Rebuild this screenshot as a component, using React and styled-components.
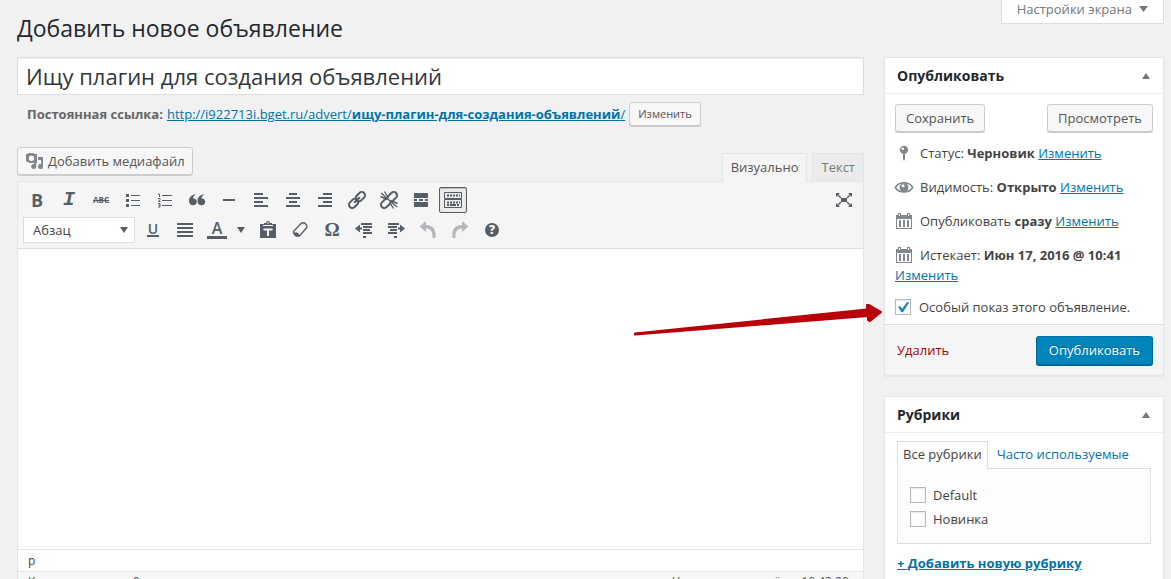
import React, { useState } from 'react';
import styled, { createGlobalStyle, css } from 'styled-components';

const theme = {
  page: '#f1f1f1',
  border: '#e5e5e5',
  text: '#444',
  heading: '#23282d',
  link: '#0073aa',
  icon: '#555d66',
  muted: '#82878c',
};

const GlobalStyle = createGlobalStyle`
  *, *::before, *::after {
    box-sizing: border-box;
  }
  html {
    scrollbar-width: none;
  }
  body {
    margin: 0;
    background: ${theme.page};
    color: ${theme.text};
    font: 13px/20px "Open Sans", sans-serif;
  }
  button, input, select, textarea {
    margin: 0;
    font: inherit;
    color: inherit;
  }
  svg {
    display: block;
    flex: none;
  }
`;

// ---------- layout ----------

const Page = styled.div`
  height: 100vh;
  overflow: hidden;
  padding: 0 7px 0 17px;
`;

const TopBar = styled.header`
  display: flex;
  justify-content: space-between;
  align-items: flex-start;
  height: 57px;
`;

const Title = styled.h1`
  margin: 0;
  padding-top: 13px;
  font-size: 23px;
  font-weight: 400;
  line-height: 30px;
  color: ${theme.heading};
`;

const ScreenOptions = styled.button`
  display: flex;
  align-items: center;
  gap: 7px;
  height: 24px;
  padding: 0 15px 6px;
  border: 1px solid #ddd;
  border-top: 0;
  background: #fff;
  color: #72777c;
`;

const Columns = styled.div`
  display: grid;
  grid-template-columns: minmax(0, 1fr) 280px;
  gap: 20px;
  align-items: start;
`;

const Row = styled.div`
  display: flex;
  align-items: center;
`;

// ---------- shared controls ----------

const Button = styled.button`
  display: inline-flex;
  align-items: center;
  justify-content: center;
  gap: 4px;
  height: 28px;
  padding: 0 10px;
  border: 1px solid #ccc;
  border-radius: 3px;
  background: #f7f7f7;
  box-shadow: 0 1px 0 #ccc;
  color: #555;
  white-space: nowrap;
  ${({ $small }) => $small && css`
    height: 24px;
    padding: 0 8px;
    font-size: 11px;
  `}
  ${({ $primary }) => $primary && css`
    height: 29px;
    padding: 0 12px;
    border-color: #0073aa #006799 #006799;
    background: #0085ba;
    box-shadow: 0 1px 0 #006799;
    color: #fff;
    text-shadow: 0 -1px 1px #006799;
  `}
`;

const Link = styled.a`
  color: ${theme.link};
  text-decoration: ${({ $plain }) => ($plain ? 'none' : 'underline')};
  font-weight: ${({ $bold }) => ($bold ? 700 : 400)};
`;

const Checkbox = styled.input.attrs({ type: 'checkbox' })`
  appearance: none;
  flex: none;
  width: 16px;
  height: 16px;
  border: 1px solid #b4b9be;
  background: #fff;
  box-shadow: inset 0 1px 2px rgba(0, 0, 0, .1);
  &:checked::before {
    content: "";
    display: block;
    width: 14px;
    height: 14px;
    background: #1e8cbe;
    clip-path: polygon(14% 48%, 32% 44%, 44% 62%, 78% 14%, 94% 18%, 50% 88%, 38% 88%);
  }
`;

// ---------- editor column ----------

const TitleInput = styled.input`
  display: block;
  width: 100%;
  height: 38px;
  padding: 0 8px;
  border: 1px solid #ddd;
  background: #fff;
  box-shadow: inset 0 1px 2px rgba(0, 0, 0, .07);
  color: #32373c;
  font-size: 22px;
`;

const Permalink = styled(Row)`
  gap: 4px;
  margin-top: 7px;
  padding-left: 10px;
  color: #666;
`;

const EditorTools = styled.div`
  display: flex;
  justify-content: space-between;
  align-items: flex-start;
  height: 34px;
  margin-top: 21px;
`;

const MediaButton = styled(Button)`
  padding: 0 7px 0 6px;
`;

const Tabs = styled.div`
  display: flex;
  gap: 5px;
  align-self: flex-end;
`;

const Tab = styled.button`
  height: 28px;
  padding: 0 8px 2px;
  border: 1px solid ${theme.border};
  border-bottom: 0;
  background: ${({ $active }) => ($active ? '#f5f5f5' : '#ebebeb')};
  color: ${({ $active }) => ($active ? '#555' : '#777')};
  ${({ $active }) => $active && css`
    height: 29px;
    margin-bottom: -1px;
    padding-bottom: 3px;
    position: relative;
  `}
`;

const EditorBox = styled.div`
  border: 1px solid ${theme.border};
  background: #fff;
`;

const Toolbar = styled.div`
  display: flex;
  flex-direction: column;
  gap: 4px;
  padding: 5px;
  border-bottom: 1px solid #ddd;
  background: #f5f5f5;
`;

const ToolRow = styled(Row)`
  gap: 4px;
  color: ${theme.icon};
`;

const Tool = styled.button`
  display: flex;
  align-items: center;
  justify-content: center;
  width: 28px;
  height: 26px;
  padding: 0;
  border: 1px solid transparent;
  border-radius: 2px;
  background: none;
  opacity: ${({ disabled }) => (disabled ? 0.4 : 1)};
  ${({ $active }) => $active && css`
    border-color: ${theme.icon};
    background: #ebebeb;
    box-shadow: inset 0 1px 1px rgba(0, 0, 0, .2);
  `}
`;

const ToolEnd = styled(Tool)`
  margin-left: auto;
`;

const Glyph = styled.span`
  font: ${({ $font }) => $font};
  text-decoration: ${({ $line }) => $line || 'none'};
`;

const Underlined = styled(Glyph)`
  padding: 0 1px;
  border-bottom: 2px solid currentColor;
`;

const ColorGlyph = styled(Glyph)`
  width: 20px;
  border-bottom: 3px solid currentColor;
  text-align: center;
`;

const SplitTool = styled(Row)`
  width: 47px;
  button + button {
    width: 19px;
  }
`;

const SelectBox = styled.label`
  display: grid;
  align-items: center;
  width: 112px;
  height: 26px;
  border: 1px solid #ddd;
  background: #fff;
  select, svg {
    grid-area: 1 / 1;
  }
  select {
    appearance: none;
    width: 100%;
    height: 24px;
    padding: 0 9px;
    border: 0;
    background: transparent;
    color: #444;
  }
  svg {
    justify-self: end;
    margin-right: 6px;
    color: ${theme.icon};
    pointer-events: none;
  }
`;

const Content = styled.textarea`
  display: block;
  width: 100%;
  height: 300px;
  padding: 10px;
  border: 0;
  resize: none;
  outline: none;
`;

const PathBar = styled.div`
  height: 22px;
  padding: 0 10px;
  border-top: 1px solid ${theme.border};
  font-size: 12px;
  line-height: 22px;
`;

const StatusBar = styled.div`
  display: flex;
  justify-content: space-between;
  padding: 0 11px 0 10px;
  border-top: 1px solid ${theme.border};
  background: #f7f7f7;
  color: #555;
  font-size: 12px;
  line-height: 20px;
`;

// ---------- sidebar ----------

const Sidebar = styled.aside`
  display: flex;
  flex-direction: column;
  gap: 20px;
`;

const Box = styled.section`
  border: 1px solid ${theme.border};
  background: #fff;
  box-shadow: 0 1px 1px rgba(0, 0, 0, .04);
`;

const BoxHead = styled.div`
  display: flex;
  align-items: center;
  justify-content: space-between;
  height: 36px;
  padding: 0 13px 0 12px;
  border-bottom: 1px solid #eee;
  h2 {
    margin: 0;
    font-size: 14px;
    font-weight: 700;
    color: ${theme.heading};
  }
  button {
    padding: 0;
    border: 0;
    background: none;
    color: #72777c;
  }
`;

const Actions = styled.div`
  display: flex;
  justify-content: space-between;
  padding: 10px 10px 5px;
`;

const Meta = styled.div`
  padding: 6px 10px 8px;
  svg {
    display: inline-block;
    margin: 0 6px 0 -1px;
    color: ${theme.muted};
    vertical-align: top;
  }
`;

const Featured = styled.div`
  display: flex;
  align-items: center;
  position: relative;
  padding: 4px 10px 7px;
  label {
    padding-left: 8px;
  }
`;

const Pointer = styled.svg`
  position: absolute;
  right: 100%;
  top: 0;
  pointer-events: none;
`;

const BoxFoot = styled.div`
  display: flex;
  align-items: center;
  justify-content: space-between;
  height: 51px;
  padding: 0 10px 0 12px;
  border-top: 1px solid #ddd;
  background: #f5f5f5;
  a {
    color: #a00;
    text-decoration: none;
  }
`;

const Categories = styled.div`
  padding: 8px 12px 12px;
`;

const CategoryTabs = styled.div`
  display: flex;
  gap: 9px;
  a {
    padding-top: 3px;
  }
`;

const CategoryTab = styled.span`
  position: relative;
  height: 28px;
  margin-bottom: -1px;
  padding: 2px 5px;
  border: 1px solid #ddd;
  border-bottom: 0;
  background: #fdfdfd;
`;

const CategoryPanel = styled.div`
  padding: 14px 12px 12px;
  margin-bottom: 9px;
  border: 1px solid #ddd;
  background: #fdfdfd;
`;

const CategoryLabel = styled.label`
  display: flex;
  align-items: center;
  gap: 7px;
  height: 24px;
`;

// ---------- icons ----------

const Icon = ({ children, ...props }) => (
  <svg width="20" height="20" viewBox="0 0 20 20" fill="currentColor" aria-hidden="true" {...props}>
    {children}
  </svg>
);

const Triangle = ({ up, size = 8 }) => (
  <svg width={size} height="6" viewBox="0 0 8 6" fill="currentColor" preserveAspectRatio="none" aria-hidden="true">
    <path d={up ? 'M4 0L8 6H0z' : 'M0 0h8L4 6z'} />
  </svg>
);

const icons = {
  bullets: (
    <path d="M3 4h3v3H3zM3 9h3v3H3zM3 14h3v3H3zM8 5h9v1H8zM8 10h9v1H8zM8 15h9v1H8z" />
  ),
  numbers: (
    <>
      <path d="M7 5h10v1H7zM7 10h10v1H7zM7 15h10v1H7z" />
      <path d="M3 4h1.500v3M3 8.500h2v1.200L3.500 11.500h2M3 13.500h2v3.500H3M3.500 15.200h1.500" fill="none" stroke="currentColor" />
    </>
  ),
  quote: (
    <path d="M9.500 4.200C7.300 5 6.100 6.800 6 8.500c2-.3 3.800 1 3.800 3.200a3.500 3.500 0 0 1-3.700 3.600C3.500 15.300 2 13.500 2 10.800 2 7.200 4.700 4.200 9.500 4.200zM18 4.200c-2.200.8-3.400 2.600-3.500 4.300 2-.3 3.700 1 3.700 3.200a3.500 3.500 0 0 1-3.700 3.600c-2.600 0-4-1.800-4-4.500 0-3.600 2.700-6.600 7.500-6.600z" />
  ),
  hr: <path d="M4 9h12v2H4z" />,
  left: <path d="M3 3h9v2H3zM3 7h14v2H3zM3 11h9v2H3zM3 15h14v2H3z" />,
  center: <path d="M6 3h8v2H6zM3 7h14v2H3zM6 11h8v2H6zM3 15h14v2H3z" />,
  right: <path d="M8 3h9v2H8zM3 7h14v2H3zM8 11h9v2H8zM3 15h14v2H3z" />,
  justify: <path d="M2 3h16v2H2zM2 7h16v2H2zM2 11h16v2H2zM2 15h16v2H2z" />,
  link: (
    <g transform="rotate(-45 10 10)" fill="none" stroke="currentColor" strokeWidth="2">
      <rect x="0" y="6.700" width="10.500" height="6.600" rx="3.300" />
      <rect x="9.500" y="6.700" width="10.500" height="6.600" rx="3.300" />
      <path d="M6 10h8" />
    </g>
  ),
  unlink: (
    <>
      <g transform="rotate(-45 10 10)" fill="none" stroke="currentColor" strokeWidth="2">
        <path d="M8.500 6.700H3.300a3.300 3.300 0 0 0 0 6.600h5.200M11.500 6.700h5.200a3.300 3.300 0 0 1 0 6.600h-5.200" />
      </g>
      <path
        d="M2 3l7 6M5.500 1.500L9.500 8M1.500 6.500L8.500 9.500M18 17l-7-6M14.500 18.500L10.500 12M18.500 13.500l-7-3M8 8l4 4"
        fill="none"
        stroke="currentColor"
        strokeWidth="1.400"
      />
    </>
  ),
  more: <path d="M3 3h14v5H3zM3 9h3v2H3zM8 9h4v2H8zM14 9h3v2h-3zM3 12h14v5H3z" />,
  kitchen: (
    <>
      <path d="M1.500 2.500h17v6h-17zM1.500 9.500h17v8h-17z" fill="none" stroke="currentColor" />
      <path d="M4 5.500h13M4 12.500h13" stroke="currentColor" strokeWidth="2" strokeDasharray="2 1" />
      <path d="M4 15h2M7 15h6M14 15h2" stroke="currentColor" strokeWidth="2" />
    </>
  ),
  fullscreen: (
    <>
      <path d="M7 8h6v4H7zM2 3h4L2 7zM18 3v4l-4-4zM2 17v-4l4 4zM18 17h-4l4-4z" />
      <path d="M3 4l4 4M17 4l-4 4M3 16l4-4M17 16l-4-4" stroke="currentColor" strokeWidth="1.300" />
    </>
  ),
  paste: (
    <>
      <path d="M2 4h4V3h2a2 2 0 0 1 4 0h2v1h4v14H2z" />
      <path d="M5.500 9.500h9M10 9v7" stroke="#f5f5f5" strokeWidth="2" fill="none" />
      <path d="M5 5.500h10M9 3h2" stroke="#f5f5f5" />
    </>
  ),
  eraser: (
    <>
      <path d="M11.500 3h3.300l2 2.500v2L9.500 16H6l-2.500-3v-1.500z" fill="#f5f5f5" stroke="currentColor" strokeWidth="1.300" strokeLinejoin="round" />
      <path d="M3.500 12.500h4l2 2.500v1H6l-2.500-3z" />
    </>
  ),
  outdent: (
    <path d="M7 3h11v2H7zM9 6h9v2H9zM9 9h7v2H9zM9 12h9v2H9zM9 16h3v2H9zM6 4.500v3h2v2H6v3L1 8.500z" />
  ),
  indent: (
    <path d="M2 3h11v2H2zM2 6h9v2H2zM4 9h7v2H4zM2 12h9v2H2zM8 16h3v2H8zM14 4.500v3h-2v2h2v3l5-4z" />
  ),
  undo: <path d="M8 1v4c7 0 10.500 4.500 9.500 13h-3c.5-6-1.500-9.500-6.500-9.500V12L1.500 6.500z" />,
  redo: <path d="M12 1v4C5 5 1.500 9.500 2.500 18h3C5 12 7 8.500 12 8.500V12l6.500-5.500z" />,
  help: (
    <>
      <circle cx="10" cy="10" r="7" />
      <text x="10" y="14" textAnchor="middle" fill="#f5f5f5" fontSize="12" fontWeight="800" fontFamily="Open Sans">?</text>
    </>
  ),
};

const MediaIcon = () => (
  <Icon color={theme.muted}>
    <path fillRule="evenodd" d="M2 3h1.500l1-1h5l1 1H13v9H5.500L2 10zM7.500 4.500a2.700 2.700 0 1 0 0 5.400 2.700 2.700 0 0 0 0-5.400z" />
    <path d="M14 6h5v9.500a2.500 2.500 0 1 1-2-2.400V9h-3z" />
    <circle cx="9.700" cy="15.500" r="2.500" />
    <path d="M10.200 11h2v4.500h-2z" />
  </Icon>
);

const PinIcon = () => (
  <Icon>
    <path fillRule="evenodd" d="M9 10.800A4.100 4.100 0 1 1 11 10.800V16l-1 2-1-2zM8.700 4.500a1.300 1.300 0 1 0 .1 2.600 1.300 1.300 0 0 0-.1-2.600z" />
  </Icon>
);

const EyeIcon = () => (
  <Icon>
    <path d="M1.300 10.500C5 4.300 15 4.300 18.700 10.500 15 16.500 5 16.500 1.300 10.500z" fill="none" stroke="currentColor" strokeWidth="1.500" />
    <path fillRule="evenodd" d="M10 6a4.500 4.500 0 1 0 0 9 4.500 4.500 0 0 0 0-9zM9 7.300a1.500 1.500 0 1 1 0 3 1.500 1.500 0 0 1 0-3z" />
  </Icon>
);

const CalendarIcon = () => (
  <Icon>
    <path fillRule="evenodd" d="M2 4h2V2h3v2h6V2h3v2h2v14H2zM3 8v9h14V8z" />
    <path d="M5 9h2v7H5zM9 9h2v7H9zM13 9h2v7h-2z" />
    <path d="M5.500 3v2M14.500 3v2" stroke="#fff" />
  </Icon>
);

// ---------- parts ----------

const ToolButton = ({ name, label, ...props }) => (
  <Tool type="button" aria-label={label} {...props}>
    <Icon>{icons[name]}</Icon>
  </Tool>
);

const BoxHeader = ({ title }) => (
  <BoxHead>
    <h2>{title}</h2>
    <button type="button" aria-label={`Свернуть: ${title}`}><Triangle up /></button>
  </BoxHead>
);

const firstRow = [
  ['bullets', 'Маркированный список'],
  ['numbers', 'Нумерованный список'],
  ['quote', 'Цитата'],
  ['hr', 'Горизонтальная линия'],
  ['left', 'По левому краю'],
  ['center', 'По центру'],
  ['right', 'По правому краю'],
  ['link', 'Вставить ссылку'],
  ['unlink', 'Удалить ссылку'],
  ['more', 'Тег «Далее»'],
];

function Editor() {
  const [title, setTitle] = useState('Ищу плагин для создания объявлений');
  return (
    <main>
      <TitleInput aria-label="Заголовок" value={title} onChange={(e) => setTitle(e.target.value)} />
      <Permalink>
        <strong>Постоянная ссылка:</strong>
        <Link href="#permalink">
          http://i922713i.bget.ru/advert/<b>ищу-плагин-для-создания-объявлений</b>/
        </Link>
        <Button type="button" $small>Изменить</Button>
      </Permalink>
      <EditorTools>
        <MediaButton type="button"><MediaIcon />Добавить медиафайл</MediaButton>
        <Tabs>
          <Tab type="button" $active>Визуально</Tab>
          <Tab type="button">Текст</Tab>
        </Tabs>
      </EditorTools>
      <EditorBox>
        <Toolbar>
          <ToolRow>
            <Tool type="button" aria-label="Жирный"><Glyph $font='700 18px/20px "Open Sans", sans-serif'>B</Glyph></Tool>
            <Tool type="button" aria-label="Курсив"><Glyph $font='italic 700 20px/20px "Liberation Mono", monospace'>I</Glyph></Tool>
            <Tool type="button" aria-label="Зачёркнутый">
              <Glyph $font='700 8px/20px "Open Sans", sans-serif' $line="line-through">ABC</Glyph>
            </Tool>
            {firstRow.map(([name, label]) => <ToolButton key={name} name={name} label={label} />)}
            <ToolButton name="kitchen" label="Дополнительная панель" $active />
            <ToolEnd type="button" aria-label="На весь экран"><Icon>{icons.fullscreen}</Icon></ToolEnd>
          </ToolRow>
          <ToolRow>
            <SelectBox>
              <select aria-label="Формат" defaultValue="p">
                <option value="p">Абзац</option>
                <option value="h1">Заголовок 1</option>
              </select>
              <Triangle />
            </SelectBox>
            <Tool type="button" aria-label="Подчёркнутый"><Underlined $font='600 14px/12px "Open Sans", sans-serif'>U</Underlined></Tool>
            <ToolButton name="justify" label="По ширине" />
            <SplitTool>
              <Tool type="button" aria-label="Цвет текста"><ColorGlyph $font='600 16px/15px "Open Sans", sans-serif'>A</ColorGlyph></Tool>
              <Tool type="button" aria-label="Выбрать цвет"><Triangle /></Tool>
            </SplitTool>
            <ToolButton name="paste" label="Вставить как текст" />
            <ToolButton name="eraser" label="Очистить форматирование" />
            <Tool type="button" aria-label="Произвольный символ"><Glyph $font='700 19px/20px "Liberation Serif", serif'>Ω</Glyph></Tool>
            <ToolButton name="outdent" label="Уменьшить отступ" />
            <ToolButton name="indent" label="Увеличить отступ" />
            <ToolButton name="undo" label="Отменить" disabled />
            <ToolButton name="redo" label="Повторить" disabled />
            <ToolButton name="help" label="Горячие клавиши" />
          </ToolRow>
        </Toolbar>
        <Content aria-label="Текст объявления" />
        <PathBar>p</PathBar>
        <StatusBar>
          <span>Количество слов: 0</span>
          <span>Черновик сохранён в 10:43:20.</span>
        </StatusBar>
      </EditorBox>
    </main>
  );
}

function PublishBox() {
  const [featured, setFeatured] = useState(true);
  return (
    <Box>
      <BoxHeader title="Опубликовать" />
      <Actions>
        <Button type="button">Сохранить</Button>
        <Button type="button">Просмотреть</Button>
      </Actions>
      <Meta><PinIcon />Статус: <b>Черновик</b> <Link href="#status">Изменить</Link></Meta>
      <Meta><EyeIcon />Видимость: <b>Открыто</b> <Link href="#visibility">Изменить</Link></Meta>
      <Meta><CalendarIcon />Опубликовать <b>сразу</b> <Link href="#date">Изменить</Link></Meta>
      <Meta><CalendarIcon />Истекает: <b>Июн 17, 2016 @ 10:41</b> <Link href="#expires">Изменить</Link></Meta>
      <Featured>
        <Checkbox id="featured" checked={featured} onChange={(e) => setFeatured(e.target.checked)} />
        <label htmlFor="featured">Особый показ этого объявление.</label>
        <Pointer width="252" height="46" viewBox="0 0 252 46" aria-hidden="true">
          <path
            d="M2 40.500L234 16.500V12h2l12 7-11 9-2-1v-4L2 41.500z"
            fill="#b9000a"
            stroke="#b9000a"
            strokeWidth="2"
            strokeLinejoin="round"
          />
        </Pointer>
      </Featured>
      <BoxFoot>
        <a href="#delete">Удалить</a>
        <Button type="button" $primary>Опубликовать</Button>
      </BoxFoot>
    </Box>
  );
}

function CategoryBox() {
  return (
    <Box>
      <BoxHeader title="Рубрики" />
      <Categories>
        <CategoryTabs>
          <CategoryTab>Все рубрики</CategoryTab>
          <Link href="#popular" $plain>Часто используемые</Link>
        </CategoryTabs>
        <CategoryPanel>
          <CategoryLabel><Checkbox />Default</CategoryLabel>
          <CategoryLabel><Checkbox />Новинка</CategoryLabel>
        </CategoryPanel>
        <Link href="#add" $bold>+ Добавить новую рубрику</Link>
      </Categories>
    </Box>
  );
}

export default function App() {
  return (
    <Page>
      <GlobalStyle />
      <TopBar>
        <Title>Добавить новое объявление</Title>
        <ScreenOptions type="button">Настройки экрана <Triangle size={9} /></ScreenOptions>
      </TopBar>
      <Columns>
        <Editor />
        <Sidebar>
          <PublishBox />
          <CategoryBox />
        </Sidebar>
      </Columns>
    </Page>
  );
}
